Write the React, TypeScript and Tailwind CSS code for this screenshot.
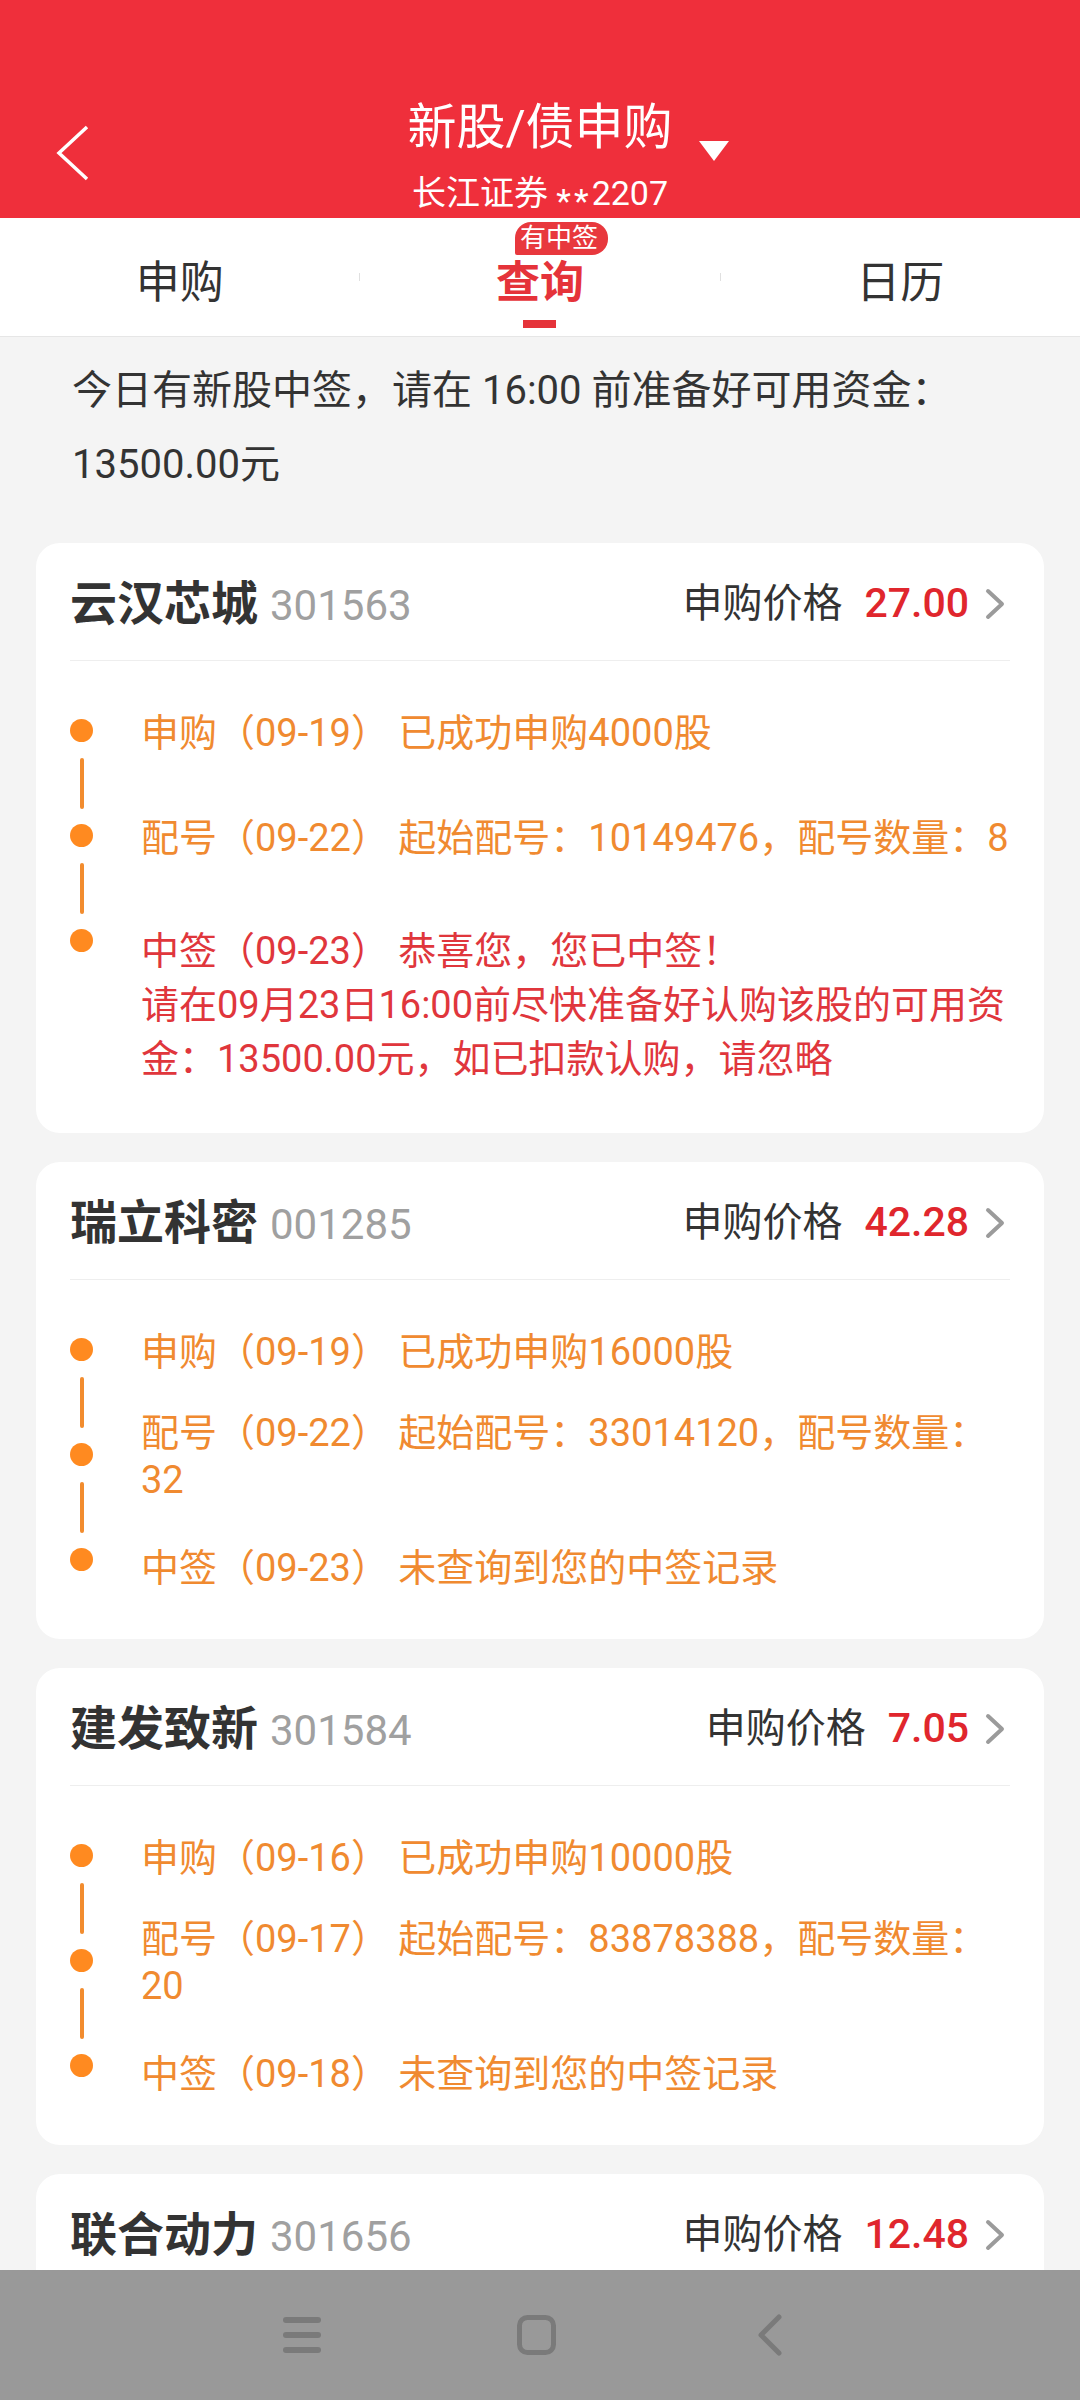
import React from 'react';

type Step = { lines: string[]; red?: boolean };
type Stock = { name: string; code: string; price: string; steps: Step[] };

const stocks: Stock[] = [
  {
    name: '云汉芯城',
    code: '301563',
    price: '27.00',
    steps: [
      { lines: ['申购（09-19） 已成功申购4000股'] },
      { lines: ['配号（09-22） 起始配号：10149476，配号数量：8'] },
      {
        red: true,
        lines: [
          '中签（09-23） 恭喜您，您已中签！',
          '请在09月23日16:00前尽快准备好认购该股的可用资',
          '金：13500.00元，如已扣款认购，请忽略',
        ],
      },
    ],
  },
  {
    name: '瑞立科密',
    code: '001285',
    price: '42.28',
    steps: [
      { lines: ['申购（09-19） 已成功申购16000股'] },
      { lines: ['配号（09-22） 起始配号：33014120，配号数量：', '32'] },
      { lines: ['中签（09-23） 未查询到您的中签记录'] },
    ],
  },
  {
    name: '建发致新',
    code: '301584',
    price: '7.05',
    steps: [
      { lines: ['申购（09-16） 已成功申购10000股'] },
      { lines: ['配号（09-17） 起始配号：83878388，配号数量：', '20'] },
      { lines: ['中签（09-18） 未查询到您的中签记录'] },
    ],
  },
  { name: '联合动力', code: '301656', price: '12.48', steps: [] },
];

function TimelineStep({ step, last }: { step: Step; last: boolean }): React.JSX.Element {
  const color = step.red ? 'text-[#E0363C]' : 'text-[#F08A30]';
  const lines = step.lines.map((l) => (
    <div key={l} className="whitespace-nowrap">
      {l}
    </div>
  ));

  return (
    <div className={`flex gap-[48px] ${last ? '' : 'h-[105px]'}`}>
      <div className="flex w-[23px] shrink-0 flex-col items-center">
        <div className="size-[23px] rounded-full bg-[#FF8A20]" />
        {!last && <div className="mt-[16px] h-[51px] w-[4px] rounded-full bg-[#F28C2E]" />}
      </div>
      {last ? (
        <div
          className={`text-[38px] ${color} ${
            step.red ? '-mt-[5px] leading-[54px]' : '-mt-[3px] leading-[47px]'
          }`}
        >
          {lines}
        </div>
      ) : (
        <div className="flex h-[28px] items-center">
          <div className={`text-[38px] leading-[47px] ${color}`}>{lines}</div>
        </div>
      )}
    </div>
  );
}

function StockCard({ stock }: { stock: Stock }): React.JSX.Element {
  return (
    <div className="shrink-0 rounded-[24px] bg-white px-[34px] pb-[47px]">
      {/* header row */}
      <div className="flex h-[118px] items-center border-b border-[#EEEEEE] pt-[5px]">
        <div className="flex items-baseline">
          <span className="text-[47px] font-bold text-[#333333]">{stock.name}</span>
          <span className="ml-[12px] text-[42px] text-[#A0A0A0]">{stock.code}</span>
        </div>
        <div className="ml-auto flex items-center">
          <div className="flex items-baseline">
            <span className="text-[40px] text-[#333333]">申购价格</span>
            <span className="ml-[22px] text-[41px] font-medium text-[#E0262D]">{stock.price}</span>
          </div>
          <svg className="ml-[15px] mr-[4px]" width="22" height="32" viewBox="0 0 22 32">
            <path
              d="M4 3 L18 16 L4 29"
              fill="none"
              stroke="#9B9B9B"
              strokeWidth="4"
              strokeLinecap="round"
              strokeLinejoin="round"
            />
          </svg>
        </div>
      </div>

      {/* timeline */}
      {stock.steps.length > 0 ? (
        <div className="flex flex-col pt-[58px]">
          {stock.steps.map((s, i) => (
            <TimelineStep key={i} step={s} last={i === stock.steps.length - 1} />
          ))}
        </div>
      ) : (
        <div className="h-[300px]" />
      )}
    </div>
  );
}

export default function App(): React.JSX.Element {
  return (
    <div className="flex h-[2400px] w-[1080px] flex-col overflow-hidden bg-[#F4F4F4] font-[Roboto,'Noto_Sans_CJK_SC',sans-serif]">
      {/* Red header */}
      <div className="grid h-[218px] shrink-0 grid-cols-[1fr_auto_1fr] bg-[#EF2F3B] pt-[98px] text-white">
        <div>
          <svg className="ml-[56px] mt-[27px]" width="34" height="56" viewBox="0 0 34 56">
            <path d="M31 2 L3 28 L31 54" fill="none" stroke="#ffffff" strokeWidth="3.5" />
          </svg>
        </div>
        <div className="flex flex-col items-center">
          <div className="text-[49px] leading-[60px]">新股/债申购</div>
          <div className="mt-[15px] text-[34px] leading-[40px]">
            长江证券 <span className="inline-block translate-y-[8px] tracking-[3px]">**</span>2207
          </div>
        </div>
        <div>
          <svg className="ml-[26px] mt-[43px]" width="30" height="20" viewBox="0 0 30 20">
            <polygon points="0,0 30,0 15,20" fill="#ffffff" />
          </svg>
        </div>
      </div>

      {/* Tabs */}
      <div className="flex h-[119px] shrink-0 border-b border-[#E6E6E6] bg-white">
        <div className="flex flex-1 flex-col items-center pt-[35px]">
          <div className="text-[44px] leading-[60px] text-[#333333]">申购</div>
        </div>
        <div className="h-[8px] w-px self-center bg-[#E0E0E0]" />
        <div className="flex flex-1 flex-col items-center pt-[35px]">
          <div className="relative text-[44px] font-bold leading-[60px] text-[#E5333A]">
            查询
            <span className="absolute left-[19px] top-[-31px] whitespace-nowrap rounded-[16px] rounded-bl-[2px] bg-[#E8383D] pl-[5px] pr-[10px] text-[26px] font-normal leading-[33px] text-white">
              有中签
            </span>
          </div>
          <div className="mt-[7px] h-[8px] w-[33px] bg-[#E5333A]" />
        </div>
        <div className="h-[8px] w-px self-center bg-[#E0E0E0]" />
        <div className="flex flex-1 flex-col items-center pt-[35px]">
          <div className="text-[44px] leading-[60px] text-[#333333]">日历</div>
        </div>
      </div>

      {/* Scrollable content */}
      <div className="flex-1 overflow-hidden">
        <div className="px-[72px] pt-[17px] text-[40px] leading-[74px] text-[#333333]">
          今日有新股中签，请在 16:00 前准备好可用资金：
          <br />
          13500.00元
        </div>
        <div className="mt-[41px] flex flex-col gap-[29px] px-[36px]">
          {stocks.map((s) => (
            <StockCard key={s.code} stock={s} />
          ))}
        </div>
      </div>

      {/* Android nav bar */}
      <div className="flex h-[130px] shrink-0 items-center justify-center bg-[#999999] pr-[8px]">
        <div className="flex w-[234px] justify-center">
          <svg width="40" height="40" viewBox="0 0 40 40">
            <path d="M4 5 H36 M4 20 H36 M4 35 H36" stroke="#7A7A7A" strokeWidth="6" strokeLinecap="round" />
          </svg>
        </div>
        <div className="flex w-[234px] justify-center">
          <svg width="39" height="40" viewBox="0 0 39 40">
            <rect x="2.5" y="2.5" width="34" height="35" rx="8" fill="none" stroke="#7A7A7A" strokeWidth="5" />
          </svg>
        </div>
        <div className="flex w-[234px] justify-center">
          <svg width="28" height="42" viewBox="0 0 28 42">
            <path
              d="M23 3 L5 21 L23 39"
              fill="none"
              stroke="#7A7A7A"
              strokeWidth="5"
              strokeLinecap="round"
              strokeLinejoin="round"
            />
          </svg>
        </div>
      </div>
    </div>
  );
}
